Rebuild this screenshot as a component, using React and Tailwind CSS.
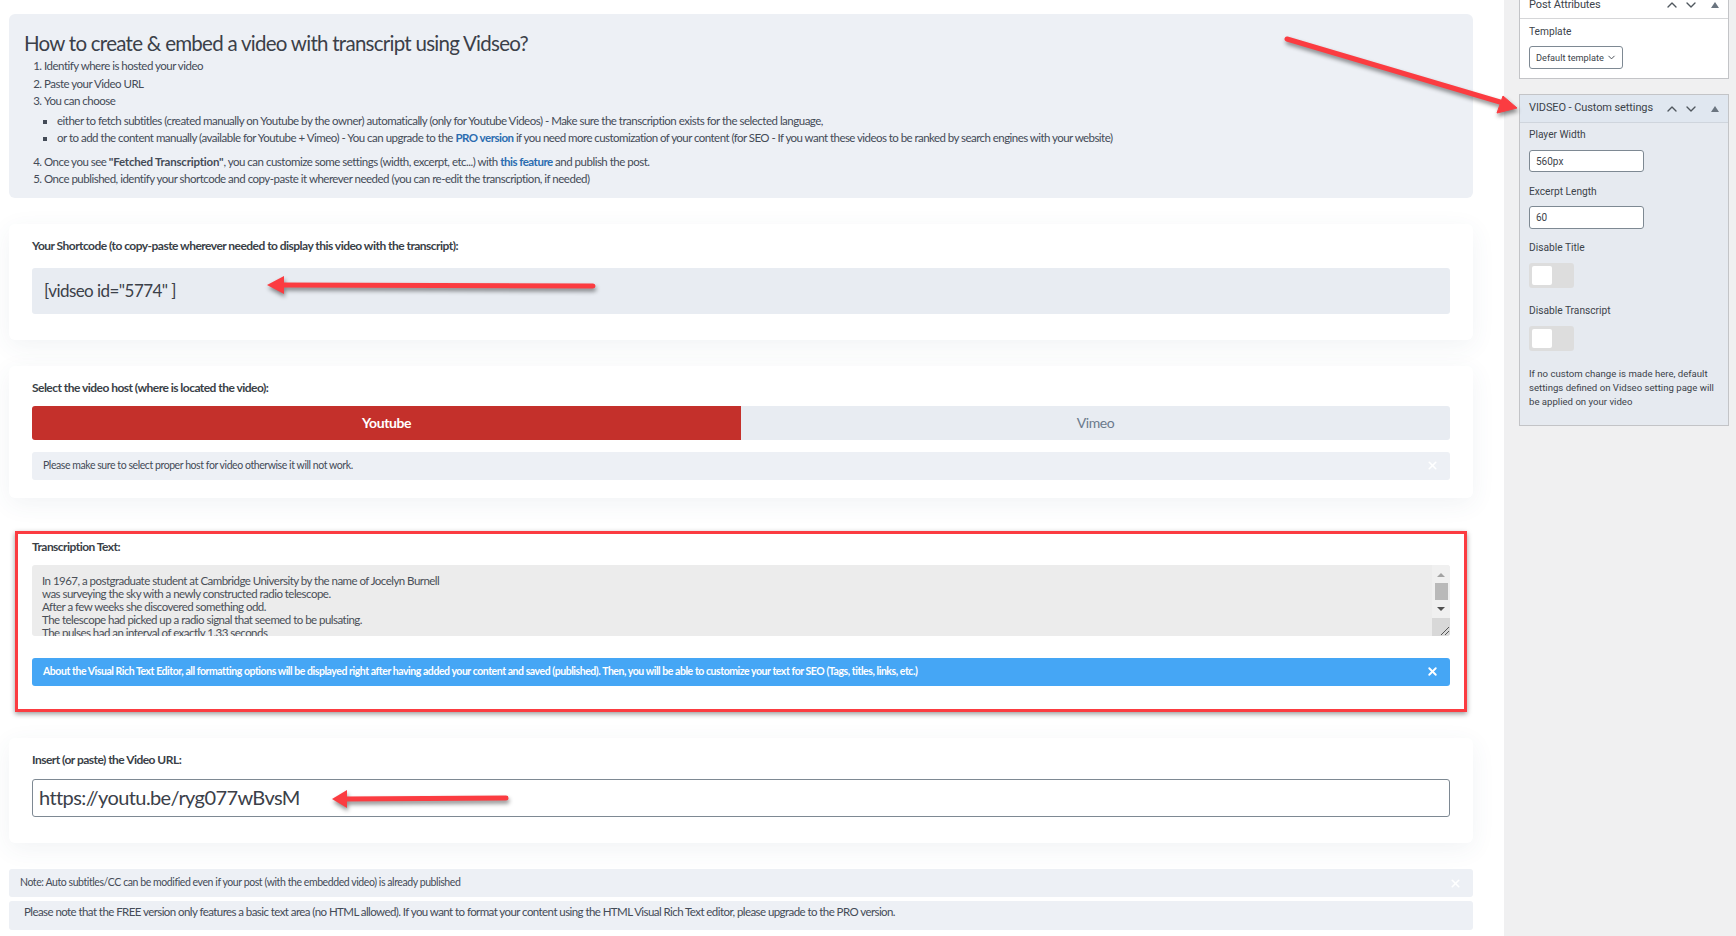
import React from "react";
import { ChevronUp, ChevronDown, X } from "lucide-react";

const Card = ({ className = "", children }) => (
  <div className={`rounded-md bg-white px-[22px] shadow-[0_6px_24px_rgba(60,80,120,0.07)] ${className}`}>
    {children}
  </div>
);

const Label = ({ children, className = "" }) => (
  <div className={`text-[12px] font-bold leading-[16px] tracking-[-0.53px] text-[#3a3f47] ${className}`}>{children}</div>
);

const PanelIcons = () => (
  <div className="flex items-center text-[#50575e]">
    <ChevronUp size={16} className="mr-[3px]" />
    <ChevronDown size={16} className="mr-[12px]" />
    <div className="h-0 w-0 border-x-[4px] border-b-[6px] border-x-transparent border-b-[#6b7580]" />
  </div>
);

const Toggle = ({ className = "" }) => (
  <div className={`flex h-[25px] w-[45px] items-center rounded-[3px] bg-[#dddddd] pl-[3px] ${className}`}>
    <div className="h-[19px] w-[20px] rounded-[2px] bg-white" />
  </div>
);

const Sidebar = () => (
  <aside className="h-[936px] w-[232px] shrink-0 overflow-hidden bg-[#f0f0f1] pl-[15px] pr-[7px] font-['Roboto',sans-serif] text-[#3c434a]">
    <section className="-mt-[9px] h-[88px] border border-[#c3c4c7] bg-white">
      <div className="flex h-[27px] items-center justify-between border-b border-[#d5d6d8] pl-[9px] pr-[9px]">
        <span className="whitespace-nowrap text-[11px] tracking-[-0.1px]">Post Attributes</span>
        <PanelIcons />
      </div>
      <div className="px-[9px] pt-[5px]">
        <div className="text-[10.2px] leading-[16px]">Template</div>
        <div className="mt-[6px] flex h-[23px] w-[94px] items-center justify-between whitespace-nowrap rounded-[3px] border border-[#7e8993] pl-[6px] pr-[5px] text-[9.2px]">
          Default template
          <ChevronDown size={11} />
        </div>
      </div>
    </section>

    <section className="mt-[15px] h-[332px] border border-[#c3c4c7] bg-[#e6eaf0]">
      <div className="flex h-[28px] items-center justify-between border-b border-[#cfd5dd] bg-[#e0e7f0] pl-[9px] pr-[9px]">
        <span className="whitespace-nowrap text-[11px] tracking-[-0.1px]">VIDSEO - Custom settings</span>
        <PanelIcons />
      </div>
      <div className="pl-[9px] pr-[6px] text-[10.2px]">
        <div className="mt-[4px] leading-[16px]">Player Width</div>
        <div className="mt-[7px] flex h-[22px] w-[115px] items-center rounded-[3px] border border-[#7e8993] bg-white pl-[6px] text-[10px]">560px</div>
        <div className="mt-[12px] leading-[16px]">Excerpt Length</div>
        <div className="mt-[6px] flex h-[23px] w-[115px] items-center rounded-[3px] border border-[#7e8993] bg-white pl-[6px] text-[10px]">60</div>
        <div className="mt-[11px] leading-[16px]">Disable Title</div>
        <Toggle className="mt-[7px]" />
        <div className="mt-[15px] leading-[16px]">Disable Transcript</div>
        <Toggle className="mt-[7px]" />
        <p className="mt-[16px] text-[9.6px] leading-[14px]">
          If no custom change is made here, default settings defined on Vidseo setting page will be applied on your video
        </p>
      </div>
    </section>
  </aside>
);

const Arrows = () => (
  <svg className="pointer-events-none absolute left-0 top-0 drop-shadow-[1px_3px_2px_rgba(0,0,0,0.45)]" width="1736" height="936" fill="none">
    <path d="M1287 39L1500 102" stroke="#fb3c41" strokeWidth="5" strokeLinecap="round" />
    <path d="M1517 108L1497 113L1503 96Z" fill="#fb3c41" stroke="#fb3c41" strokeWidth="1" />
    <path d="M593 286L280 285" stroke="#fb3c41" strokeWidth="5" strokeLinecap="round" />
    <path d="M267 285L284 276L284 294Z" fill="#fb3c41" />
    <path d="M506 798L345 799" stroke="#fb3c41" strokeWidth="5" strokeLinecap="round" />
    <path d="M332 799L347 790L347 808Z" fill="#fb3c41" />
  </svg>
);

export default function App() {
  return (
    <div className="relative flex h-[936px] w-[1736px] overflow-hidden bg-white font-['Lato',sans-serif] text-[#444b57]">
      <main className="w-[1504px] shrink-0 pl-[9px] pr-[31px] pt-[14px]">
        <div className="h-[184px] rounded-md bg-[#edf0f5] pl-[15px] pt-[16px]">
          <h1 className="text-[20.5px] font-normal leading-[26px] tracking-[-0.73px] text-[#3b4049]">
            How to create &amp; embed a video with transcript using Vidseo?
          </h1>
          <ol className="mt-[1px] list-decimal pl-[20px] text-[11.5px] leading-[17.5px] tracking-[-0.5px]">
            <li>Identify where is hosted your video</li>
            <li>Paste your Video URL</li>
            <li>
              You can choose
              <ul className="mb-[6px] mt-[2px] list-[square] pl-[13px]">
                <li>either to fetch subtitles (created manually on Youtube by the owner) automatically (only for Youtube Videos) - Make sure the transcription exists for the selected language,</li>
                <li>
                  or to add the content manually (available for Youtube + Vimeo) - You can upgrade to the{" "}
                  <a className="font-bold text-[#2b6cb0]">PRO version</a>
                  <span className="tracking-[-0.55px]"> if you need more customization of your content (for SEO - If you want these videos to be ranked by search engines with your website)</span>
                </li>
              </ul>
            </li>
            <li>
              Once you see <b className="tracking-[-0.2px]">"Fetched Transcription"</b>, you can customize some settings (width, excerpt, etc...) with{" "}
              <a className="font-bold text-[#2b6cb0]">this feature</a> and publish the post.
            </li>
            <li>Once published, identify your shortcode and copy-paste it wherever needed (you can re-edit the transcription, if needed)</li>
          </ol>
        </div>

        <Card className="mt-[26px] h-[116px] pl-[23px] pr-[23px] pt-[14px]">
          <Label>Your Shortcode (to copy-paste wherever needed to display this video with the transcript):</Label>
          <div className="mt-[14px] flex h-[46px] items-center rounded-[3px] bg-[#e8ecf2] pl-[12px] text-[17px] tracking-[-0.55px] text-[#3b4049]">
            [vidseo id="5774" ]
          </div>
        </Card>

        <Card className="mt-[26px] h-[132px] pl-[23px] pr-[23px] pt-[14px]">
          <Label>Select the video host (where is located the video):</Label>
          <div className="mt-[10px] flex h-[34px] overflow-hidden rounded-[3px] text-[14px] font-bold tracking-[-0.4px]">
            <div className="flex w-1/2 items-center justify-center bg-[#c4302b] pb-[1px] text-white">Youtube</div>
            <div className="flex w-1/2 items-center justify-center bg-[#e8ecf2] pb-[1px] font-normal text-[#6b7a8c]">Vimeo</div>
          </div>
          <div className="mt-[12px] flex h-[28px] items-center justify-between rounded-[3px] bg-[#edf0f5] pb-[1px] pl-[11px] pr-[11px] text-[10.5px] tracking-[-0.43px]">
            Please make sure to select proper host for video otherwise it will not work.
            <X size={13} strokeWidth={3} className="text-white" />
          </div>
        </Card>

        <section className="mx-[6px] mt-[33px] h-[181px] border-[3px] border-[#fb3c41] bg-white pl-[14px] pr-[14px] pt-[5px] shadow-[0_2px_5px_rgba(0,0,0,0.4)]">
          <Label>Transcription Text:</Label>
          <div className="mt-[10px] flex h-[71px] overflow-hidden rounded-[3px] bg-[#ececec]">
            <div className="flex-1 overflow-hidden pl-[10px] pt-[9px] text-[11.5px] leading-[13px] tracking-[-0.53px] text-[#4a4f57]">
              <div>In 1967, a postgraduate student at Cambridge University by the name of Jocelyn Burnell</div>
              <div>was surveying the sky with a newly constructed radio telescope.</div>
              <div>After a few weeks she discovered something odd.</div>
              <div>The telescope had picked up a radio signal that seemed to be pulsating.</div>
              <div>The pulses had an interval of exactly 1.33 seconds</div>
            </div>
            <div className="flex w-[18px] flex-col items-center bg-[#f0f0f0]">
              <div className="mt-[8px] h-0 w-0 border-x-[4px] border-b-[4px] border-x-transparent border-b-[#a3a3a3]" />
              <div className="mt-[6px] h-[17px] w-[13px] bg-[#b9b9b9]" />
              <div className="mt-[7px] h-0 w-0 border-x-[4px] border-t-[4px] border-x-transparent border-t-[#505050]" />
              <div className="mt-[7px] flex h-[18px] w-[18px] items-end justify-end bg-[#d8d8d8]">
                <svg width="10" height="10" viewBox="0 0 10 10" stroke="#555" fill="none">
                  <path d="M1 9L9 1M5 9L9 5" />
                </svg>
              </div>
            </div>
          </div>
          <div className="mt-[22px] flex h-[28px] items-center justify-between rounded-[3px] bg-[#45a6f5] pb-[1px] pl-[11px] pr-[11px] text-[10.5px] font-bold tracking-[-0.45px] text-white">
            About the Visual Rich Text Editor, all formatting options will be displayed right after having added your content and saved (published). Then, you will be able to customize your text for SEO (Tags, titles, links, etc.)
            <X size={13} strokeWidth={3.5} />
          </div>
        </section>

        <Card className="mt-[26px] h-[105px] pl-[23px] pr-[23px] pt-[14px]">
          <Label>Insert (or paste) the Video URL:</Label>
          <div className="mt-[11px] flex h-[38px] items-center rounded-[3px] border border-[#7e8993] pb-[2px] pl-[6px] text-[20px] tracking-[-0.6px] text-[#3b4049]">
            https://youtu.be/ryg077wBvsM
          </div>
        </Card>

        <div className="mt-[26px] flex h-[28px] items-center justify-between rounded-[3px] bg-[#edf0f5] pl-[11px] pr-[11px] text-[10.5px] tracking-[-0.42px]">
          Note: Auto subtitles/CC can be modified even if your post (with the embedded video) is already published
          <X size={13} strokeWidth={3} className="text-white" />
        </div>
        <div className="mt-[4px] flex h-[29px] items-start rounded-[3px] bg-[#edf0f5] pl-[15px] pt-[2px] text-[11.5px] tracking-[-0.57px]">
          Please note that the FREE version only features a basic text area (no HTML allowed). If you want to format your content using the HTML Visual Rich Text editor, please upgrade to the PRO version.
        </div>
      </main>
      <Sidebar />
      <Arrows />
    </div>
  );
}
